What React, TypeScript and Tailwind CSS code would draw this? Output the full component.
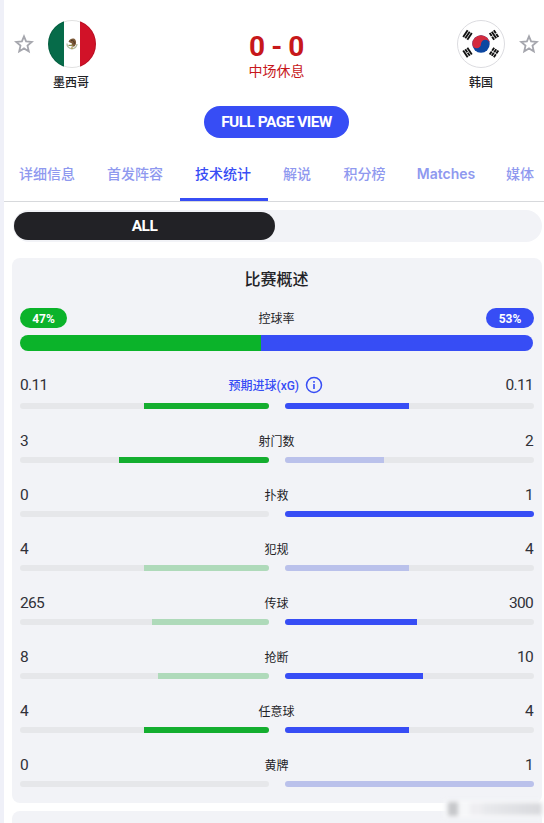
import { useState } from 'react';
import { clsx } from 'clsx';

interface Stat {
  label: string;
  home: string;
  away: string;
  homePct: number;
  awayPct: number;
  homeStrong?: boolean;
  awayStrong?: boolean;
  info?: boolean;
}

const tabs = [
  { label: '详细信息', width: 'w-[88px]' },
  { label: '首发阵容', width: 'w-[88px]' },
  { label: '技术统计', width: 'w-[88px]' },
  { label: '解说', width: 'w-[60px]' },
  { label: '积分榜', width: 'w-[75px]' },
  { label: 'Matches', width: 'w-[88px]' },
  { label: '媒体', width: 'w-[60px]' },
];

const stats: Stat[] = [
  { label: '预期进球(xG)', home: '0.11', away: '0.11', homePct: 50.2, awayPct: 49.8, homeStrong: true, awayStrong: true, info: true },
  { label: '射门数', home: '3', away: '2', homePct: 60.2, awayPct: 39.8, homeStrong: true },
  { label: '扑救', home: '0', away: '1', homePct: 0, awayPct: 100, awayStrong: true },
  { label: '犯规', home: '4', away: '4', homePct: 50.2, awayPct: 49.8 },
  { label: '传球', home: '265', away: '300', homePct: 46.9, awayPct: 53.1, awayStrong: true },
  { label: '抢断', home: '8', away: '10', homePct: 44.5, awayPct: 55.5, awayStrong: true },
  { label: '任意球', home: '4', away: '4', homePct: 50.2, awayPct: 49.8, homeStrong: true, awayStrong: true },
  { label: '黄牌', home: '0', away: '1', homePct: 0, awayPct: 100 },
];

function StarButton() {
  return (
    <button type="button" aria-label="Favourite" className="mt-[34px] h-5 w-5">
      <svg viewBox="0 0 20 20" className="h-5 w-5" fill="none" stroke="#a5a6ad" strokeWidth="1.8">
        <path d="M10 2.4 12.1 7.4 17.8 7.9 13.5 11.6 14.8 17.4 10 14.4 5.2 17.4 6.5 11.6 2.2 7.9 7.9 7.4Z" />
      </svg>
    </button>
  );
}

function MexicoFlag() {
  return (
    <svg viewBox="0 0 48 48" className="h-12 w-12">
      <defs>
        <clipPath id="mx">
          <circle cx="24" cy="24" r="24" />
        </clipPath>
      </defs>
      <g clipPath="url(#mx)">
        <rect width="48" height="48" fill="#fff" />
        <rect width="16" height="48" fill="#066b49" />
        <rect x="32" width="16" height="48" fill="#d11228" />
        <path d="M19 23.5a5 5 0 0 0 10 .5" fill="none" stroke="#b3bda2" strokeWidth="1.3" />
        <path d="M20.5 21.5c1.5-3 5.5-4 7-1.5 1 1.8.8 4.5-.8 6.3-1.2.6-2.6.4-4-.6 1-.8 1.6-1.8.8-2.8-1 .2-2.1-.4-3-1.4Z" fill="#7d5b3a" />
        <path d="M23 20.5c2-.6 3.5.6 3.3 3.3" fill="none" stroke="#4a3526" strokeWidth="1" />
        <path d="M20.5 25.3h4.5" stroke="#8a8a4b" strokeWidth="1.2" />
        <circle cx="24" cy="28" r=".9" fill="#b29b57" />
      </g>
      <circle cx="24" cy="24" r="23.5" fill="none" stroke="#000" strokeOpacity=".12" />
    </svg>
  );
}

function Trigram({ x, y, angle, broken }: { x: number; y: number; angle: number; broken: boolean[] }) {
  return (
    <g transform={`translate(${x} ${y}) rotate(${angle})`} stroke="#111" strokeWidth="1.9">
      {broken.map((b, i) => (
        <path key={i} d={b ? 'M-4 0h3.6M.4 0h3.6' : 'M-4 0h8'} transform={`translate(0 ${(i - 1) * 2.5})`} />
      ))}
    </g>
  );
}

function KoreaFlag() {
  return (
    <svg viewBox="0 0 48 48" className="h-12 w-12">
      <circle cx="24" cy="24" r="23.5" fill="#fff" stroke="#dcdce0" />
      <circle cx="24" cy="24" r="8.7" fill="#0d47a1" />
      <path d="M15.3 24a8.7 8.7 0 0 1 17.4 0 4.35 4.35 0 0 0-8.7 0 4.35 4.35 0 0 1-8.7 0Z" fill="#d32b3e" />
      <Trigram x={10.5} y={15} angle={-56} broken={[false, false, false]} />
      <Trigram x={37} y={15} angle={56} broken={[true, false, true]} />
      <Trigram x={10.5} y={32.5} angle={56} broken={[false, true, false]} />
      <Trigram x={37} y={32.5} angle={-56} broken={[true, true, true]} />
    </svg>
  );
}

function InfoIcon() {
  return (
    <svg viewBox="0 0 18 18" className="mb-0.5 h-[18px] w-[18px]" fill="none" stroke="#374df5">
      <circle cx="9" cy="9" r="7.5" strokeWidth="1.5" />
      <path d="M9 8v5" strokeWidth="1.6" />
      <path d="M9 5v1.7" strokeWidth="1.6" />
    </svg>
  );
}

function StatRow({ stat }: { stat: Stat }) {
  return (
    <div className="h-[54px]">
      <div className={clsx('flex items-center justify-between text-[#303138]', stat.info ? 'h-[26px]' : 'h-[30px]')}>
        <span className="w-20 text-[15.5px] tracking-[-0.7px]">{stat.home}</span>
        {stat.info ? (
          <span className="flex items-center gap-1 pr-[3px] text-xs font-medium text-[#374df5]">
            <span className="w-[72px] whitespace-nowrap">{stat.label}</span>
            <InfoIcon />
          </span>
        ) : (
          <span className="pr-px text-xs text-[#222226]">{stat.label}</span>
        )}
        <span className="w-20 pr-px text-right text-[15.5px] tracking-[-0.7px]">{stat.away}</span>
      </div>
      <div className={clsx('flex gap-4', stat.info ? 'mt-1' : 'mt-0')}>
        <div className="flex h-1.5 flex-1 justify-end overflow-hidden rounded-full bg-[#e6e7ea]">
          <div className={clsx('h-full', stat.homeStrong ? 'bg-[#14ae2f]' : 'bg-[#afdaba]')} style={{ width: `${stat.homePct}%` }} />
        </div>
        <div className="h-1.5 flex-1 overflow-hidden rounded-full bg-[#e6e7ea]">
          <div className={clsx('h-full', stat.awayStrong ? 'bg-[#374df5]' : 'bg-[#bac1eb]')} style={{ width: `${stat.awayPct}%` }} />
        </div>
      </div>
    </div>
  );
}

export default function App() {
  const [active, setActive] = useState('技术统计');

  return (
    <div className="h-[823px] w-[544px] overflow-hidden border-l-4 border-[#eff0f8] bg-white font-[Roboto,'Noto_Sans_CJK_SC',sans-serif] text-[#222226]">
      <header className="flex h-[106px] justify-between pl-[10px] pr-[5px]">
        <div className="flex">
          <StarButton />
          <div className="ml-[14px] flex w-12 flex-col items-center pt-5">
            <MexicoFlag />
            <span className="mt-[7px] whitespace-nowrap pr-0.5 text-xs font-medium leading-4">墨西哥</span>
          </div>
        </div>
        <div className="flex w-20 flex-col items-center pt-[31px] text-[#c7181b]">
          <span className="whitespace-nowrap text-[28px] font-bold leading-8 tracking-[-0.4px]">0 - 0</span>
          <span className="-mt-px text-sm leading-[18px]">中场休息</span>
        </div>
        <div className="flex">
          <div className="mr-[14px] flex w-12 flex-col items-center pt-5">
            <KoreaFlag />
            <span className="mt-[7px] whitespace-nowrap text-xs font-medium leading-4">韩国</span>
          </div>
          <StarButton />
        </div>
      </header>

      <div className="flex justify-center pl-[5px]">
        <button type="button" className="h-8 w-[145px] whitespace-nowrap rounded-full bg-[#374df5] pt-0.5 text-[15.5px] font-bold tracking-[-0.55px] text-white">
          FULL PAGE VIEW
        </button>
      </div>

      <nav className="mt-2 flex h-14 border-b border-[#d7d9dc]">
        {tabs.map((tab) => (
          <button
            key={tab.label}
            type="button"
            onClick={() => setActive(tab.label)}
            className={clsx(
              'h-[55px] shrink-0 whitespace-nowrap border-b-[3px] pr-0.5 pt-[3px] text-sm',
              tab.width,
              tab.label === active ? 'border-[#374df5] text-[#374df5]' : 'border-transparent text-[#8f99ef]',
              tab.label === 'Matches' ? "font-['Inter'] font-semibold" : 'font-medium',
            )}
          >
            {tab.label}
          </button>
        ))}
      </nav>

      <div className="ml-[9px] mt-2 h-8 w-[529px] rounded-full bg-[#f2f3f7] p-px pt-0.5">
        <button type="button" className="block h-7 w-[261px] rounded-full bg-[#222226] pt-0.5 text-[15.5px] font-bold tracking-[-0.5px] text-white">
          ALL
        </button>
      </div>

      <section className="ml-2 mt-4 h-[545px] w-[530px] rounded-lg bg-[#f2f3f7] px-2 pt-[11px]">
        <h2 className="pr-px text-center text-base font-medium leading-[22px]">比赛概述</h2>
        <div className="mt-[17px] flex h-5 items-center justify-between text-xs">
          <span className="flex h-5 w-[47px] items-center justify-center rounded-full bg-[#0bb32a] pt-px font-bold text-white">47%</span>
          <span className="pt-0.5">控球率</span>
          <span className="flex h-5 w-12 items-center justify-center rounded-full bg-[#374df5] pt-px font-bold text-white">53%</span>
        </div>
        <div className="mr-px mt-[7px] flex h-4 overflow-hidden rounded-full bg-gradient-to-r from-[#0bb32a] from-47% to-[#374df5] to-47%" />
        <div className="mt-[22px]">
          {stats.map((stat) => (
            <StatRow key={stat.label} stat={stat} />
          ))}
        </div>
      </section>

      <section className="relative ml-2 mt-2 h-20 w-[530px] rounded-lg bg-[#f2f3f7]">
        <div className="absolute -top-[11px] right-0 flex h-[18px] w-[98px] items-center bg-[#f6f7f9] pl-1 blur-[2px]">
          <div className="h-3.5 w-2.5 bg-[#c6c7ca]" />
          <div className="ml-3 h-3 w-3 bg-[#eeeef1]" />
          <div className="h-3 w-[60px] bg-gradient-to-r from-[#e9eaed] to-[#d8d9dd]" />
        </div>
      </section>
    </div>
  );
}
